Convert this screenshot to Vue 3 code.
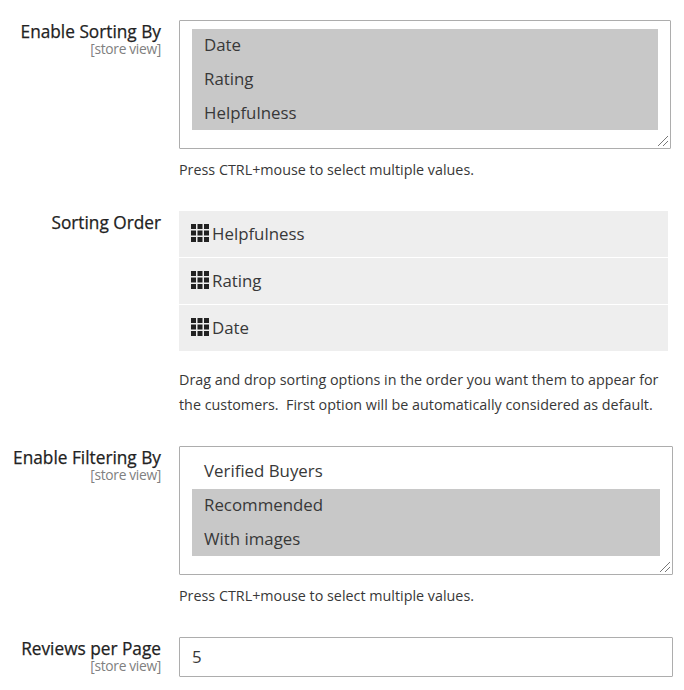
<script setup>
import { ref } from 'vue'

const sortingOptions = [
  { label: 'Date', selected: true },
  { label: 'Rating', selected: true },
  { label: 'Helpfulness', selected: true }
]
const sortingOrder = ['Helpfulness', 'Rating', 'Date']
const filterOptions = [
  { label: 'Verified Buyers', selected: false },
  { label: 'Recommended', selected: true },
  { label: 'With images', selected: true }
]
const perPage = ref('5')
const cells = [0, 6.5, 13]
</script>

<template>
  <main class="settings">
    <section class="field sorting">
      <div class="label">
        <span class="name">Enable Sorting By</span>
        <span class="scope">[store view]</span>
      </div>
      <div class="control">
        <div class="multiselect">
          <div v-for="o in sortingOptions" :key="o.label" class="option" :class="{ selected: o.selected }">{{ o.label }}</div>
          <svg class="grip" width="12" height="12" viewBox="0 0 12 12"><path d="M1 11L11 1M6 11L11 6" /></svg>
        </div>
        <p class="note">Press CTRL+mouse to select multiple values.</p>
      </div>
    </section>

    <section class="field order">
      <div class="label">
        <span class="name">Sorting Order</span>
      </div>
      <div class="control">
        <ul class="sortable">
          <li v-for="item in sortingOrder" :key="item">
            <svg class="handle" width="18" height="18" viewBox="0 0 18 18">
              <template v-for="y in cells" :key="y">
                <rect v-for="x in cells" :key="x" :x="x" :y="y" width="5" height="5" />
              </template>
            </svg>
            <span class="item">{{ item }}</span>
          </li>
        </ul>
        <p class="note">Drag and drop sorting options in the order you want them to appear for<br>the customers.&nbsp; First option will be automatically considered as default.</p>
      </div>
    </section>

    <section class="field filtering">
      <div class="label">
        <span class="name">Enable Filtering By</span>
        <span class="scope">[store view]</span>
      </div>
      <div class="control">
        <div class="multiselect">
          <div v-for="o in filterOptions" :key="o.label" class="option" :class="{ selected: o.selected }">{{ o.label }}</div>
          <svg class="grip" width="12" height="12" viewBox="0 0 12 12"><path d="M1 11L11 1M6 11L11 6" /></svg>
        </div>
        <p class="note">Press CTRL+mouse to select multiple values.</p>
      </div>
    </section>

    <section class="field paging">
      <div class="label">
        <span class="name">Reviews per Page</span>
        <span class="scope">[store view]</span>
      </div>
      <div class="control">
        <input v-model="perPage" class="text" type="text" aria-label="Reviews per Page">
      </div>
    </section>
  </main>
</template>

<style>
body {
  margin: 0;
  background: #fff;
}
</style>

<style scoped>
.settings {
  box-sizing: border-box;
  width: 684px;
  height: 690px;
  padding-top: 20px;
  overflow: hidden;
  font-family: "Open Sans", sans-serif;
  font-size: 16.85px;
  color: #383838;
}
.field {
  display: grid;
  grid-template-columns: 161px 494px;
  column-gap: 18px;
  box-sizing: border-box;
}
.sorting { height: 191px; grid-template-columns: 161px 492px; }
.order { height: 235px; grid-template-columns: 161px 489px; }
.filtering { height: 191px; }
.label {
  display: flex;
  flex-direction: column;
  align-items: flex-end;
  white-space: nowrap;
}
.name {
  padding-top: 1px;
  line-height: 22px;
  font-size: 17.25px;
  font-weight: 500;
  -webkit-text-stroke: 0.25px #222;
  color: #222;
}
.scope {
  margin-top: -3px;
  line-height: 17px;
  font-size: 13.8px;
  letter-spacing: -0.33px;
  color: #808080;
}
.multiselect {
  position: relative;
  box-sizing: border-box;
  height: 129px;
  padding: 8px 12px;
  border: 1px solid #adadad;
  border-radius: 1px;
}
.option {
  box-sizing: border-box;
  height: 33.7px;
  padding-left: 12px;
  line-height: 32.7px;
}
.option:nth-child(3) { line-height: 34.7px; }
.selected { background: #c8c8c8; }
.grip {
  position: absolute;
  right: 1px;
  bottom: 1px;
  fill: none;
  stroke: #777;
  stroke-width: 1;
}
.note {
  margin: 8px 0 0;
  font-size: 14.34px;
  line-height: 25px;
  white-space: nowrap;
}
.sortable {
  display: flex;
  flex-direction: column;
  gap: 1px;
  margin: 0;
  padding: 0;
  list-style: none;
}
.sortable li {
  display: flex;
  align-items: center;
  gap: 3px;
  height: 46px;
  padding-left: 12px;
  background: #eee;
}
.handle {
  margin-bottom: 2px;
  fill: #222;
}
.item { padding-bottom: 1px; }
.order .note { margin-top: 16px; }
.text {
  display: block;
  box-sizing: border-box;
  width: 100%;
  height: 40px;
  padding: 0 13px 1px 12px;
  border: 1px solid #adadad;
  border-radius: 1px;
  outline: none;
  background: #fff;
  font: inherit;
  color: inherit;
}
</style>
